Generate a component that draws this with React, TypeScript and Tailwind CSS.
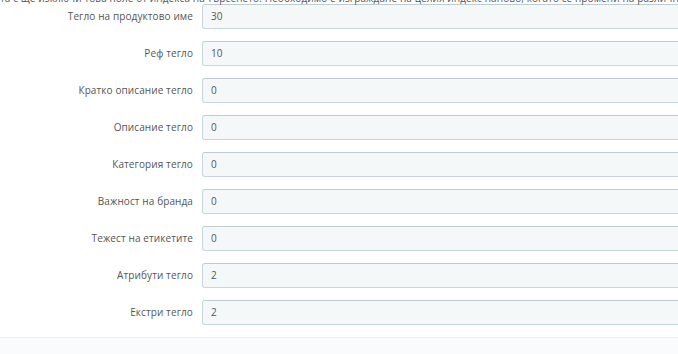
const rows = [
  { label: "Тегло на продуктово име", value: "30" },
  { label: "Реф тегло", value: "10" },
  { label: "Кратко описание тегло", value: "0" },
  { label: "Описание тегло", value: "0" },
  { label: "Категория тегло", value: "0" },
  { label: "Важност на бранда", value: "0" },
  { label: "Тежест на етикетите", value: "0" },
  { label: "Атрибути тегло", value: "2" },
  { label: "Екстри тегло", value: "2" },
];

export default function App() {
  return (
    <div className="w-[678px] h-[354px] overflow-hidden bg-white font-['Open_Sans',sans-serif] text-[10px] tracking-[0.1px] text-[#555]">
      <div className="relative h-[4px]">
        <p className="absolute left-0 top-[-9px] whitespace-nowrap leading-[15px] text-[#555] text-[10px]">
          та с ще изключи това поле от индекса на търсенето. Необходимо е изграждане на целия индекс наново, когато се промени на различни
        </p>
      </div>
      <div className="flex flex-col gap-[12px]">
        {rows.map((r) => (
          <div key={r.label} className="flex items-center h-[25px]">
            <label className="w-[193px] shrink-0 text-right">{r.label}</label>
            <div className="ml-[9px] h-[25px] w-[520px] shrink-0 rounded-[3px] border border-[#c7d6db] border-t-[#bfcdd2] bg-[#f5f8f9] px-[8px] flex items-center text-[#555]">
              {r.value}
            </div>
          </div>
        ))}
      </div>
      <div className="mt-[12px] h-[30px] border-t border-[#eee] bg-[#fafbfc]" />
    </div>
  );
}
